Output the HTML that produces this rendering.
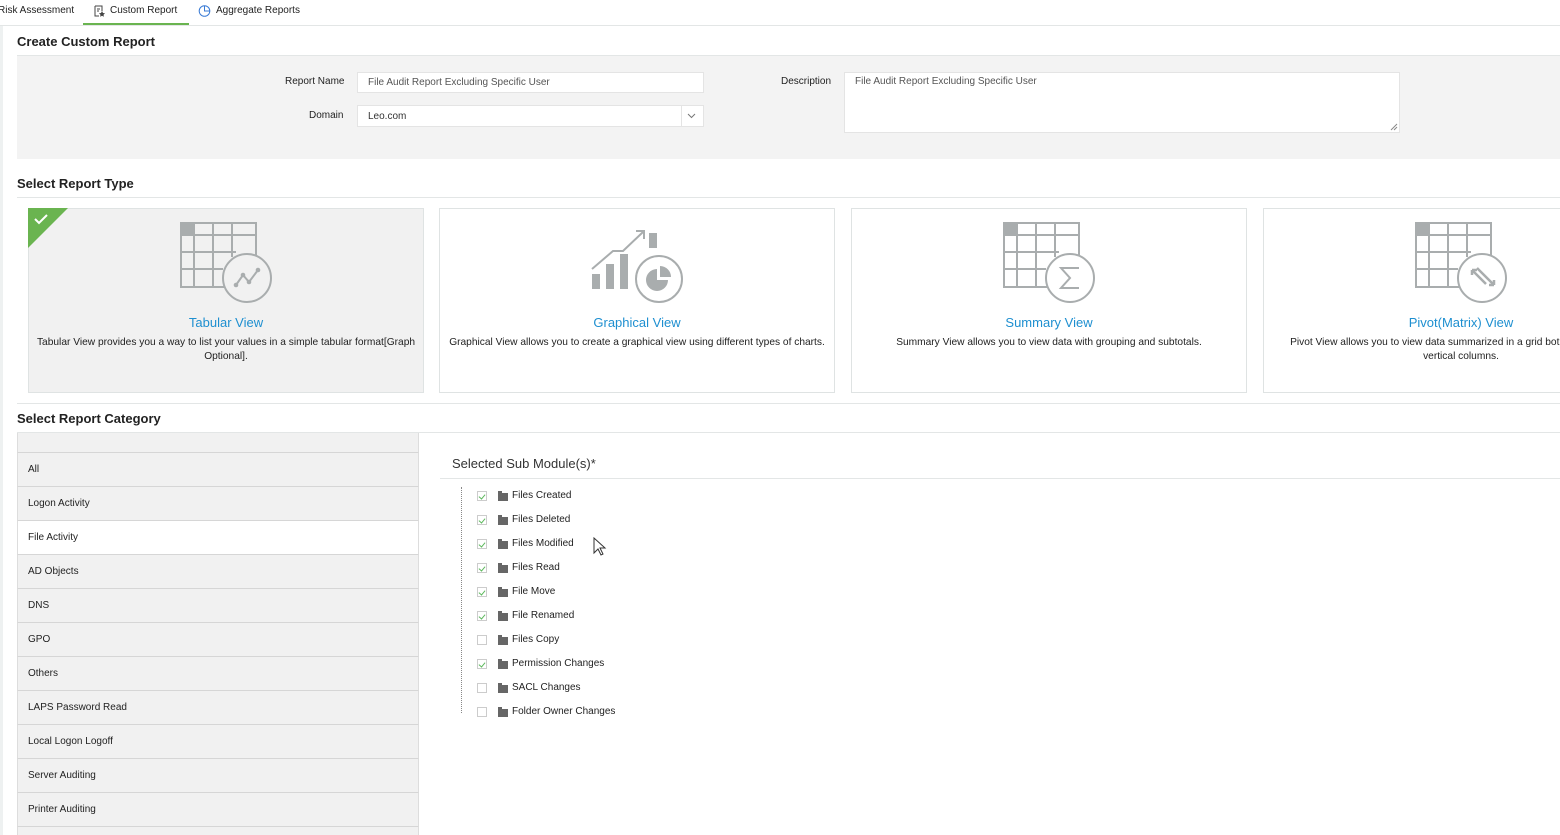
<!DOCTYPE html>
<html><head><meta charset="utf-8"><style>
*{box-sizing:border-box;margin:0;padding:0}
html,body{width:1560px;height:835px;overflow:hidden}
body{background:#fff;font-family:"Liberation Sans",sans-serif;color:#222;position:relative}
.a{position:absolute}
.t{font-size:10px;white-space:nowrap}
.h{font-size:13px;font-weight:bold;color:#222}
.line{position:absolute;height:1px;background:#e3e6e6}
.card{position:absolute;top:208px;width:396px;height:185px;border:1px solid #dfe3e3;background:#fff}
.card .ic{position:absolute;left:50%;top:13px;margin-left:-46px}
.card .ti{position:absolute;top:106px;width:100%;text-align:center;color:#1e8fd0;font-size:13px}
.card .de{position:absolute;top:127px;left:0;width:100%;text-align:center;font-size:10.2px;line-height:14px;color:#222;white-space:nowrap}
.row{position:absolute;left:17px;width:402px;height:34px;border-bottom:1px solid #d6d6d6;background:#f1f1f1;font-size:10px;padding:11px 0 0 10px;border-left:1px solid #ddd;border-right:1px solid #ddd}
.it{position:absolute;left:477px;font-size:10px;height:12px}
.cb{position:absolute;left:0;top:0;width:10px;height:10px;border:1px solid #ccc;background:#fff}
.cb.on:after{content:"";position:absolute;left:2px;top:1px;width:3px;height:5px;border-right:1.5px solid #5cb85c;border-bottom:1.5px solid #5cb85c;transform:rotate(40deg)}
.fd{position:absolute;left:21px;top:2px;width:10px;height:8px;background:#666}
.fd:before{content:"";position:absolute;left:0;top:-2px;width:4px;height:2px;background:#666}
.it span{position:absolute;left:35px;top:-1px;white-space:nowrap}
</style></head><body>
<div class="a" style="left:0;top:25px;width:3px;height:810px;background:#eef1f1"></div>
<div class="a t" style="left:-2px;top:5px">Risk Assessment</div>
<svg class="a" style="left:94px;top:5px" width="11" height="12" viewBox="0 0 11 12"><path d="M1 1h7v5M1 1v10h4" fill="none" stroke="#444"/><path d="M3 4h3M3 6h2" stroke="#444"/><path d="M8 6l1 2 2 .3-1.5 1.4.4 2L8 10.8 6.1 11.7l.4-2L5 8.3 7 8z" fill="#444"/></svg>
<div class="a t" style="left:110px;top:5px">Custom Report</div>
<div class="a" style="left:83px;top:23px;width:106px;height:3px;background:#6ab450"></div>
<svg class="a" style="left:198px;top:4px" width="13" height="13" viewBox="0 0 13 13"><circle cx="6.5" cy="7" r="5.3" fill="none" stroke="#3a7bd5"/><path d="M6.5 1.7V7h5.3" fill="none" stroke="#3a7bd5"/></svg>
<div class="a t" style="left:216px;top:5px">Aggregate Reports</div>
<div class="line" style="left:0;top:25px;width:1560px"></div>

<div class="a h" style="left:17px;top:34px">Create Custom Report</div>
<div class="line" style="left:17px;top:55px;width:1543px"></div>
<div class="a" style="left:17px;top:56px;width:1543px;height:103px;background:#f3f3f3"></div>
<div class="a t" style="left:285px;top:76px">Report Name</div>
<div class="a t" style="left:357px;top:72px;width:347px;height:21px;background:#fff;border:1px solid #e4e4e4;padding:4px 10px;color:#555">File Audit Report Excluding Specific User</div>
<div class="a t" style="left:309px;top:110px">Domain</div>
<div class="a t" style="left:357px;top:105px;width:347px;height:22px;background:#fff;border:1px solid #e4e4e4;padding:5px 10px;color:#333">Leo.com</div>
<div class="a" style="left:681px;top:106px;width:1px;height:20px;background:#e4e4e4"></div>
<svg class="a" style="left:687px;top:113px" width="9" height="6"><path d="M1 1l3.5 3.5L8 1" fill="none" stroke="#777"/></svg>
<div class="a t" style="left:781px;top:76px">Description</div>
<div class="a t" style="left:844px;top:72px;width:556px;height:61px;background:#fff;border:1px solid #e4e4e4;padding:3px 10px;color:#555">File Audit Report Excluding Specific User</div>
<svg class="a" style="left:1390px;top:123px" width="8" height="8"><path d="M7 1L1 7M7 4L4 7" stroke="#888"/></svg>

<div class="a h" style="left:17px;top:176px">Select Report Type</div>
<div class="line" style="left:17px;top:197px;width:1543px"></div>

<div class="card" style="left:28px;background:#f1f1f1">
 <div class="a" style="left:-1px;top:-1px;width:0;height:0;border-top:40px solid #6ab450;border-right:40px solid transparent"></div>
 <svg class="a" style="left:5px;top:5px" width="14" height="11"><path d="M1 5l4 4 8-8" fill="none" stroke="#fff" stroke-width="2"/></svg>
 <svg class="ic" width="95" height="82" viewBox="0 0 95 82"><g stroke="#a9adae" stroke-width="2" fill="none"><rect x="1" y="1" width="13" height="12" fill="#a9adae"/><path d="M1 1h75v37M1 1v64h60M1 13h75M1 30h55M1 47h42M14 1v64M33 1v64M52 1v34"/></g><circle cx="67" cy="56" r="24" fill="#f1f1f1" stroke="#a9adae" stroke-width="2"/><path d="M56 63l7-10 6 7 9-12" fill="none" stroke="#a9adae" stroke-width="2"/><g fill="#a9adae"><circle cx="56" cy="63" r="2.3"/><circle cx="63" cy="53" r="2.3"/><circle cx="69" cy="60" r="2.3"/><circle cx="78" cy="48" r="2.3"/></g></svg>
 <div class="ti">Tabular View</div>
 <div class="de">Tabular View provides you a way to list your values in a simple tabular format[Graph<br>Optional].</div>
</div>
<div class="card" style="left:439px">
 <svg class="ic" width="95" height="82" viewBox="0 0 95 82"><g fill="#a9adae"><rect x="1" y="52" width="8" height="15"/><rect x="15" y="42" width="8" height="25"/><rect x="29" y="32" width="8" height="35"/><rect x="58" y="11" width="8" height="15"/></g><path d="M1 47l21-18h10l20-19" fill="none" stroke="#a9adae" stroke-width="2"/><path d="M45 9h8v8" fill="none" stroke="#a9adae" stroke-width="2"/><circle cx="68" cy="57" r="23" fill="#fff" stroke="#a9adae" stroke-width="2"/><path d="M66 47a11 11 0 1 0 11 11H66z" fill="#a9adae"/><path d="M69 44v11h11a11 11 0 0 0-11-11z" fill="#a9adae"/></svg>
 <div class="ti">Graphical View</div>
 <div class="de">Graphical View allows you to create a graphical view using different types of charts.</div>
</div>
<div class="card" style="left:851px">
 <svg class="ic" width="95" height="82" viewBox="0 0 95 82"><g stroke="#a9adae" stroke-width="2" fill="none"><rect x="1" y="1" width="13" height="12" fill="#a9adae"/><path d="M1 1h75v37M1 1v64h60M1 13h75M1 30h55M1 47h42M14 1v64M33 1v64M52 1v34"/></g><circle cx="67" cy="56" r="24" fill="#fff" stroke="#a9adae" stroke-width="2"/><path d="M76 46H58l9 10-9 10h18" fill="none" stroke="#a9adae" stroke-width="2"/></svg>
 <div class="ti">Summary View</div>
 <div class="de">Summary View allows you to view data with grouping and subtotals.</div>
</div>
<div class="card" style="left:1263px">
 <svg class="ic" width="95" height="82" viewBox="0 0 95 82"><g stroke="#a9adae" stroke-width="2" fill="none"><rect x="1" y="1" width="13" height="12" fill="#a9adae"/><path d="M1 1h75v37M1 1v64h60M1 13h75M1 30h55M1 47h42M14 1v64M33 1v64M52 1v34"/></g><circle cx="67" cy="56" r="24" fill="#fff" stroke="#a9adae" stroke-width="2"/><path d="M57 48l14 14M62 46l17 17M57 48v5M57 48h5M79 63h-5M79 63v-5" fill="none" stroke="#a9adae" stroke-width="2.5"/></svg>
 <div class="ti">Pivot(Matrix) View</div>
 <div class="de">Pivot View allows you to view data summarized in a grid both horizontal and<br>vertical columns.</div>
</div>
<div class="line" style="left:17px;top:403px;width:1543px"></div>

<div class="a h" style="left:17px;top:411px">Select Report Category</div>
<div class="line" style="left:17px;top:432px;width:1543px"></div>
<div class="row" style="top:433px;height:20px"></div>
<div class="row" style="top:453px">All</div>
<div class="row" style="top:487px">Logon Activity</div>
<div class="row" style="top:521px;background:#fff">File Activity</div>
<div class="row" style="top:555px">AD Objects</div>
<div class="row" style="top:589px">DNS</div>
<div class="row" style="top:623px">GPO</div>
<div class="row" style="top:657px">Others</div>
<div class="row" style="top:691px">LAPS Password Read</div>
<div class="row" style="top:725px">Local Logon Logoff</div>
<div class="row" style="top:759px">Server Auditing</div>
<div class="row" style="top:793px">Printer Auditing</div>
<div class="row" style="top:827px"></div>

<div class="a" style="left:452px;top:456px;font-size:13px;color:#333">Selected Sub Module(s)*</div>
<div class="line" style="left:440px;top:478px;width:1120px"></div>
<div class="a" style="left:461px;top:487px;height:226px;border-left:1px dotted #888"></div>
<div class="it" style="top:491px"><i class="cb on"></i><i class="fd"></i><span>Files Created</span></div>
<div class="it" style="top:515px"><i class="cb on"></i><i class="fd"></i><span>Files Deleted</span></div>
<div class="it" style="top:539px"><i class="cb on"></i><i class="fd"></i><span>Files Modified</span></div>
<div class="it" style="top:563px"><i class="cb on"></i><i class="fd"></i><span>Files Read</span></div>
<div class="it" style="top:587px"><i class="cb on"></i><i class="fd"></i><span>File Move</span></div>
<div class="it" style="top:611px"><i class="cb on"></i><i class="fd"></i><span>File Renamed</span></div>
<div class="it" style="top:635px"><i class="cb"></i><i class="fd"></i><span>Files Copy</span></div>
<div class="it" style="top:659px"><i class="cb on"></i><i class="fd"></i><span>Permission Changes</span></div>
<div class="it" style="top:683px"><i class="cb"></i><i class="fd"></i><span>SACL Changes</span></div>
<div class="it" style="top:707px"><i class="cb"></i><i class="fd"></i><span>Folder Owner Changes</span></div>
<svg class="a" style="left:593px;top:537px" width="14" height="20"><path d="M1 1v15l4-4 3 6 2-1-3-6h5z" fill="#fff" stroke="#333"/></svg>
</body></html>
